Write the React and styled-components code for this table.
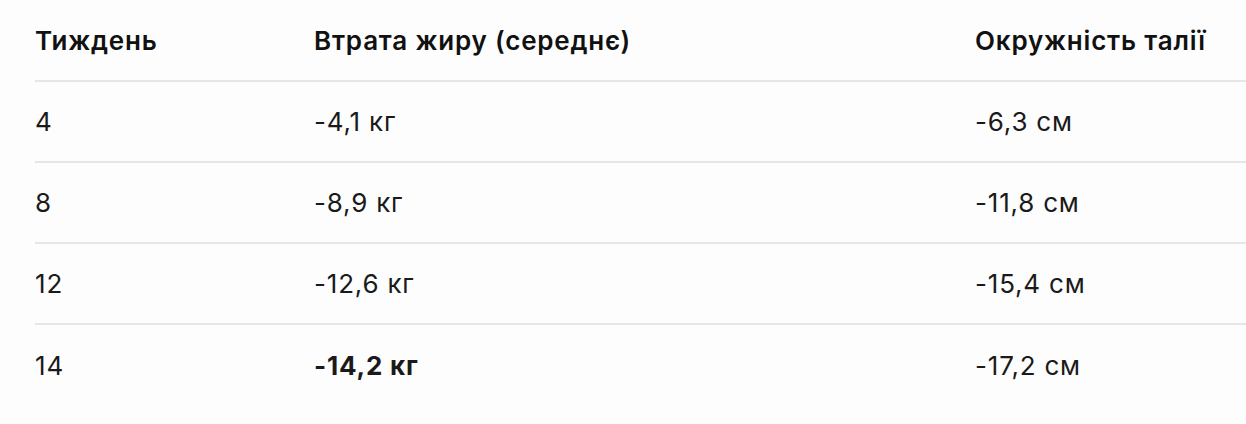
import React from "react";
import styled, { createGlobalStyle } from "styled-components";

const GlobalStyle = createGlobalStyle`
    html, body {
        margin: 0;
        padding: 0;
        background: #fdfdfd;
        overflow: hidden;
    }
    body {
        font-family: Inter, "Noto Sans", sans-serif;
        color: #161616;
    }
`;

const Page = styled.div`
    padding-left: 35px;
    width: 1246px;
    box-sizing: border-box;
`;

const Table = styled.div`
    display: grid;
    grid-template-columns: 279px 661px 1fr;
    width: 1211px;
`;

const Row = styled.div`
    display: contents;

    & > div {
        border-bottom: ${({ $last }) => ($last ? "none" : "2px solid #e6e6e6")};
    }
`;

const Cell = styled.div`
    display: flex;
    align-items: center;
    box-sizing: border-box;
    height: ${({ $head }) => ($head ? "82px" : "81px")};
    font-size: 26px;
    font-weight: ${({ $head, $bold }) => ($head ? 600 : $bold ? 700 : 400)};
    color: ${({ $head }) => ($head ? "#111" : "#1a1a1a")};
    letter-spacing: 0.8px;
    white-space: nowrap;
`;

const rows = [
    { week: "4", fat: "-4,1 кг", waist: "-6,3 см" },
    { week: "8", fat: "-8,9 кг", waist: "-11,8 см" },
    { week: "12", fat: "-12,6 кг", waist: "-15,4 см" },
    { week: "14", fat: "-14,2 кг", waist: "-17,2 см", bold: true },
];

export default function App() {
    return (
        <>
            <GlobalStyle />
            <Page>
                <Table>
                    <Row>
                        <Cell $head>Тиждень</Cell>
                        <Cell $head>Втрата жиру (середнє)</Cell>
                        <Cell $head>Окружність талії</Cell>
                    </Row>
                    {rows.map((r, i) => (
                        <Row key={r.week} $last={i === rows.length - 1}>
                            <Cell>{r.week}</Cell>
                            <Cell $bold={r.bold}>{r.fat}</Cell>
                            <Cell>{r.waist}</Cell>
                        </Row>
                    ))}
                </Table>
            </Page>
        </>
    );
}
